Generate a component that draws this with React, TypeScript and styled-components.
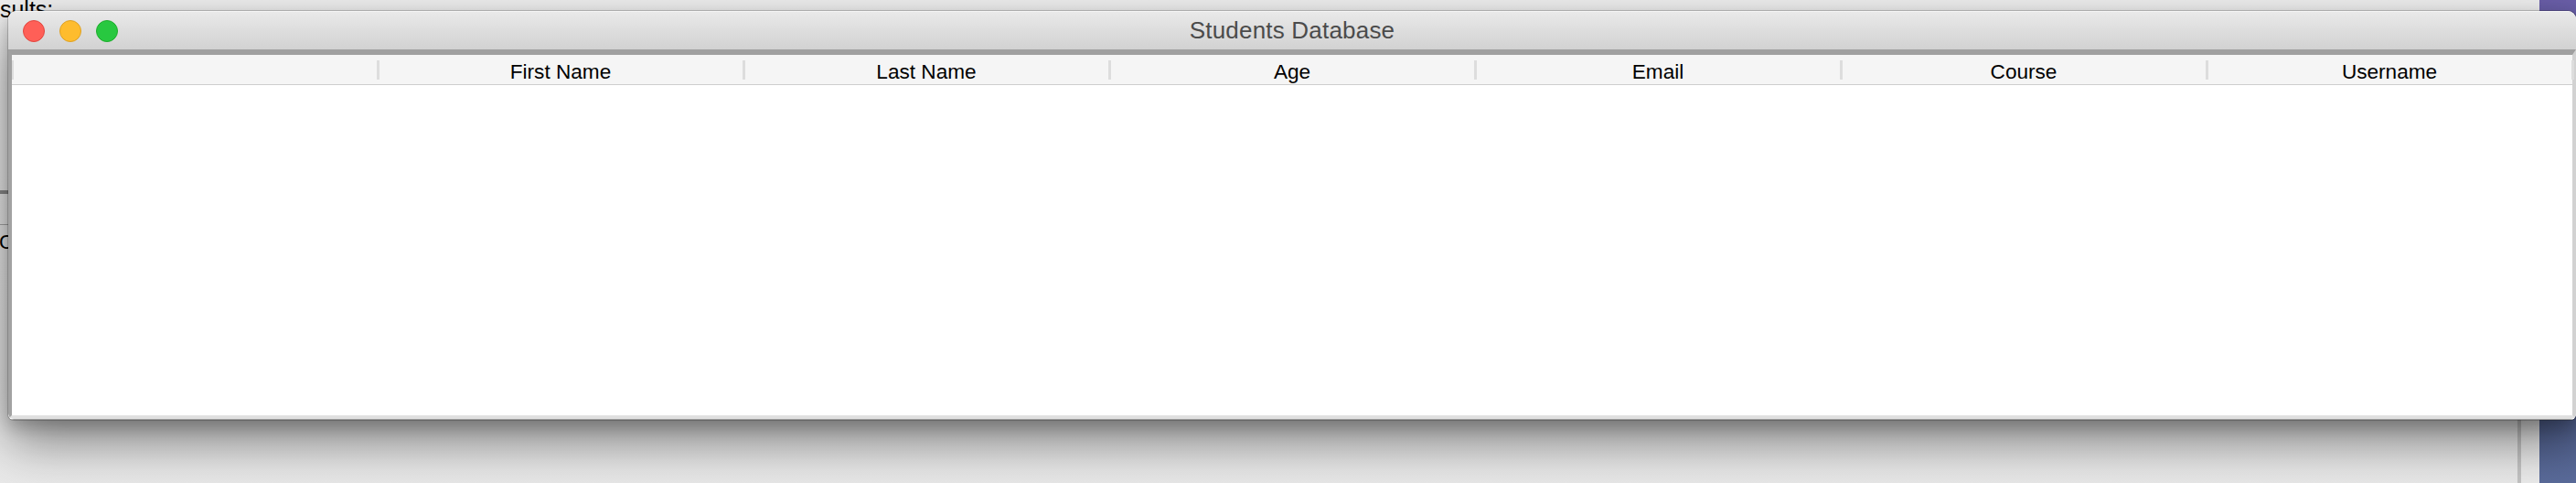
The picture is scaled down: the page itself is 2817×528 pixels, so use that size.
import React from "react";
import styled, { createGlobalStyle } from "styled-components";

const GlobalStyle = createGlobalStyle`
  html, body {
    margin: 0;
    padding: 0;
    background: #ececec;
  }
  body {
    font-family: "Liberation Sans", Arial, sans-serif;
  }
`;

const Desktop = styled.div`
  position: relative;
  width: 2817px;
  height: 528px;
  overflow: hidden;
  background: linear-gradient(180deg, #6a5ea8 0%, #54609a 30%, #4b5985 75%, #5a6b9a 100%);
`;

/* window lying behind the main one */
const BackWindow = styled.div`
  position: absolute;
  left: -40px;
  top: -2px;
  width: 2817px;
  height: 560px;
  display: flex;
  flex-direction: column;
  background: linear-gradient(180deg, #efefef 0%, #e9e9e9 100%);
`;

const BackLabel = styled.div`
  padding-left: 8px;
  font-family: "Liberation Sans", Arial, sans-serif;
  font-size: 25px;
  line-height: 25px;
  color: #000;
`;

const LowerPanel = styled.div`
  margin-top: 185px;
  flex: 1;
  display: flex;
  border-top: 4px solid #8c8c8c;
`;

const LowerMain = styled.div`
  flex: 1;
  display: flex;
  flex-direction: column;
  border-right: 4px solid #c3c3c3;
`;

const LowerBar = styled.div`
  height: 33px;
  border-bottom: 1px solid #a9a9a9;
`;

const LowerText = styled.div`
  margin-top: 8px;
  padding-left: 39px;
  font-family: "Liberation Sans", Arial, sans-serif;
  font-size: 22px;
  line-height: 22px;
  color: #000;
`;

const Gutter = styled.div`
  width: 20px;
  background: linear-gradient(180deg, #e4e4e4, #ececec);
`;

/* main window */
const Window = styled.div`
  position: absolute;
  left: 9px;
  top: 12px;
  width: 2808px;
  height: 447px;
  display: flex;
  flex-direction: column;
  border-radius: 9px 9px 6px 6px;
  overflow: hidden;
  box-shadow: 0 0 0 1px rgba(0, 0, 0, 0.18), 0 24px 56px rgba(0, 0, 0, 0.45),
    0 8px 18px rgba(0, 0, 0, 0.2);
  background: #ffffff;
`;

const TitleBar = styled.div`
  position: relative;
  height: 42px;
  flex: none;
  display: flex;
  align-items: center;
  justify-content: center;
  background: linear-gradient(180deg, #e9e9e9 0%, #dcdcdc 55%, #d2d2d2 100%);
  border-top: 1px solid #f4f4f4;
  box-sizing: border-box;
`;

const Lights = styled.div`
  position: absolute;
  left: 16px;
  top: 0;
  bottom: 0;
  display: flex;
  align-items: center;
  gap: 16px;
`;

const Light = styled.span<{ $fill: string; $edge: string }>`
  width: 24px;
  height: 24px;
  border-radius: 50%;
  box-sizing: border-box;
  background: ${(p) => p.$fill};
  border: 1px solid ${(p) => p.$edge};
`;

const Title = styled.div`
  font-family: "Liberation Sans", Arial, sans-serif;
  font-size: 26px;
  color: #4b4b4b;
  letter-spacing: 0.2px;
`;

const Frame = styled.div`
  flex: 1;
  display: flex;
  flex-direction: column;
  border-top: 6px solid #a0a0a0;
  border-left: 4px solid #a2a2a2;
  border-right: 4px solid #d2d2d2;
  border-bottom: 4px solid #e0e0e0;
  border-radius: 0 0 6px 6px;
  background: #ffffff;
`;

const HeaderRow = styled.div`
  display: grid;
  grid-template-columns: repeat(7, 400px);
  height: 33px;
  box-sizing: border-box;
  background: #f5f5f5;
  border-bottom: 1px solid #cecece;
`;

const HeaderCell = styled.div<{ $first?: boolean }>`
  position: relative;
  display: flex;
  align-items: center;
  justify-content: center;
  font-family: "Liberation Sans", Arial, sans-serif;
  font-size: 22.6px;
  color: #000000;
  padding-top: 5px;
  box-sizing: border-box;

  &::after {
    content: "";
    position: absolute;
    right: -2px;
    top: 6px;
    bottom: 5px;
    width: 3px;
    background: #dddddd;
  }

  ${(p) =>
    p.$first &&
    `
    &::before {
      content: "";
      position: absolute;
      left: 0;
      top: 6px;
      bottom: 5px;
      width: 2px;
      background: #dddddd;
    }
  `}
`;

const Body = styled.div`
  flex: 1;
  background: #ffffff;
`;

const Outline = styled.div`
  height: 1px;
  flex: none;
  background: #9a9a9a;
`;

const columns = ["", "First Name", "Last Name", "Age", "Email", "Course", "Username"];

export default function App() {
  return (
    <>
      <GlobalStyle />
      <Desktop>
        <BackWindow>
          <BackLabel>Results:</BackLabel>
          <LowerPanel>
            <LowerMain>
              <LowerBar />
              <LowerText>C</LowerText>
            </LowerMain>
            <Gutter />
          </LowerPanel>
        </BackWindow>
        <Window>
          <TitleBar>
            <Lights>
              <Light $fill="#ff5f57" $edge="#e2463f" />
              <Light $fill="#febc2e" $edge="#dea123" />
              <Light $fill="#28c840" $edge="#1dad2b" />
            </Lights>
            <Title>Students Database</Title>
          </TitleBar>
          <Frame>
            <HeaderRow>
              {columns.map((c, i) => (
                <HeaderCell key={i} $first={i === 0}>
                  {c}
                </HeaderCell>
              ))}
            </HeaderRow>
            <Body />
          </Frame>
          <Outline />
        </Window>
      </Desktop>
    </>
  );
}
